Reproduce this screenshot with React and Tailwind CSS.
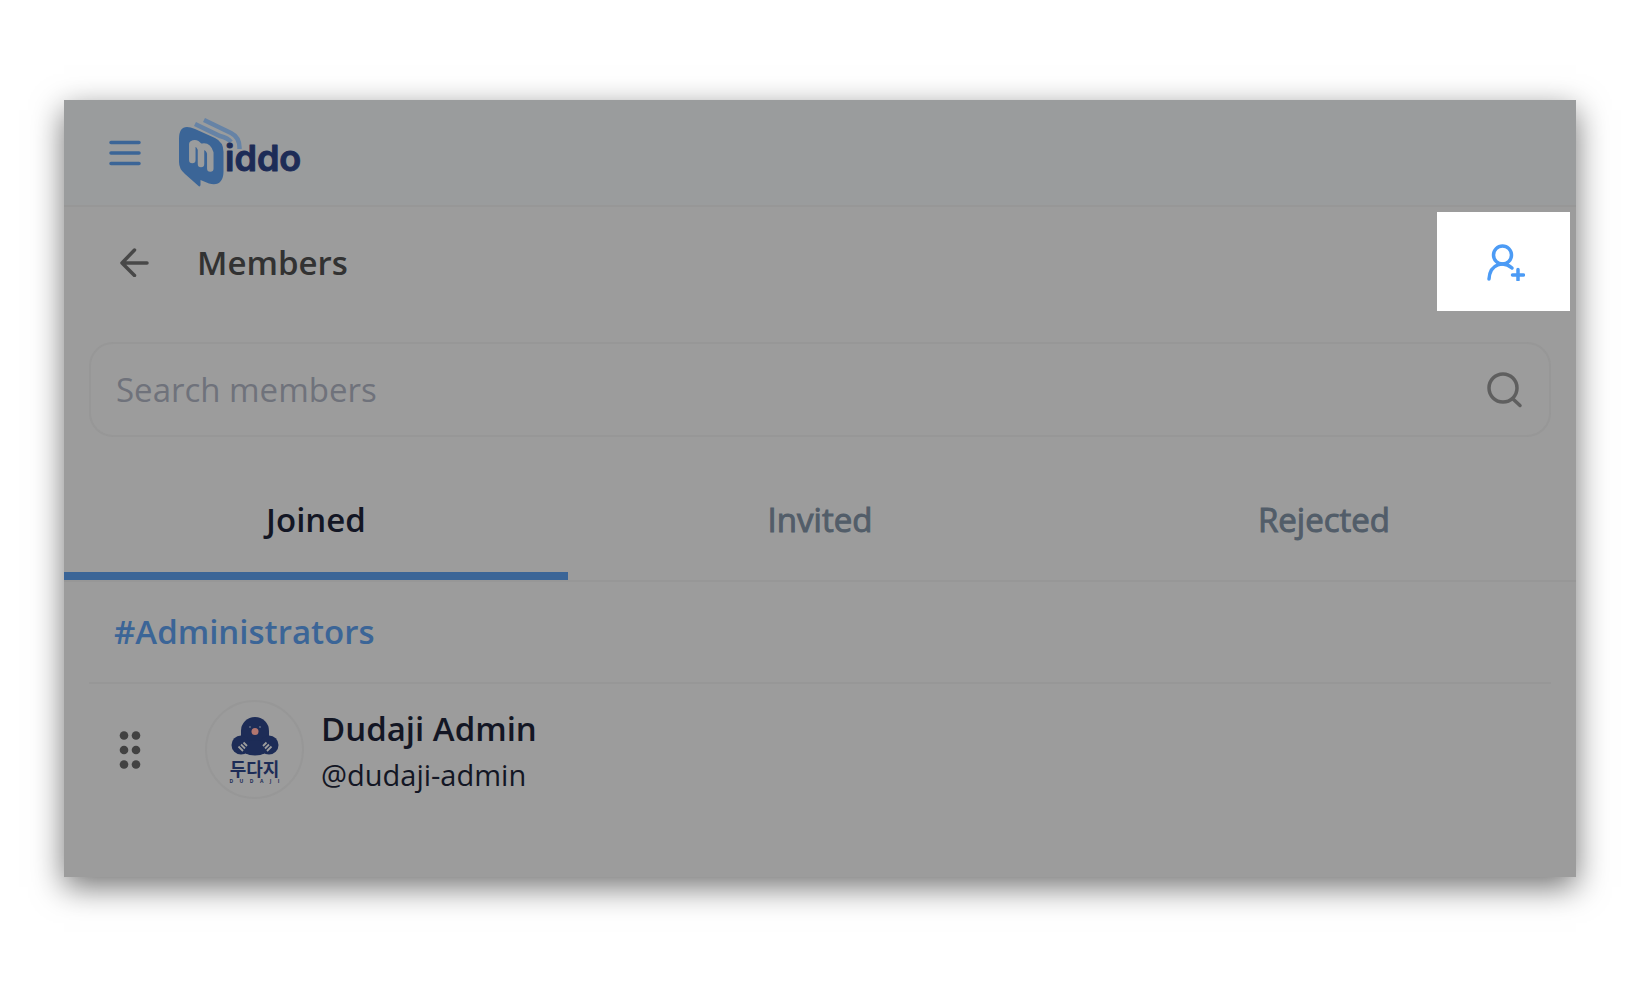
import React from "react";

function Logo() {
  return (
    <a href="#home" aria-label="middo" className="flex items-center">
      <svg viewBox="0 0 128 70" className="h-[70px] w-32" aria-hidden="true">
        <g fill="none" stroke="#6683a6" strokeWidth="4.500">
          <path d="M16 6 L41 18 Q49 20 52 24" />
          <path d="M25 2 L52 15 Q61 19.500 60.500 31" />
        </g>
        <path
          d="M0 21 Q0 4 16 11 L36 20 Q44.500 24 44.500 34 L44.500 54 Q44 69 30 65.500 L21.500 62 L21.500 67 Q21 69.500 19 67.500 L6 56 Q0 51 0 44 Z"
          fill="#3b6597"
        />
        <g fill="none" stroke="#9a9c9d" strokeWidth="6.500" strokeLinecap="round" strokeLinejoin="round">
          <path d="M13.300 42 V26 Q18 23 22 31 V46" />
          <path d="M22 29 Q29 27 31.300 35 V50.500" />
        </g>
        <text
          x="46"
          y="53"
          fill="#1d2c57"
          stroke="#1d2c57"
          strokeWidth="1"
          strokeLinejoin="round"
          fontFamily="Inter, sans-serif"
          fontSize="36"
          fontWeight="600"
        >
          iddo
        </text>
      </svg>
    </a>
  );
}

function MemberAvatar() {
  return (
    <div className="flex size-[99px] shrink-0 flex-col items-center rounded-full border-2 border-[#979797] pt-[15px] text-[#1d2c57]">
      <svg viewBox="0 0 48 40" className="h-10 w-12" aria-hidden="true">
        <g fill="#1d2c57">
          <path d="M10 14 A14 14 0 0 1 38 14 L38 30 L24 38 L10 30 Z" />
          <circle cx="10" cy="28" r="9.500" />
          <circle cx="38" cy="28" r="9.500" />
          <ellipse cx="24" cy="31" rx="14" ry="7.500" />
        </g>
        <circle cx="24" cy="14.500" r="3.500" fill="#b3766f" />
        <circle cx="19" cy="10" r="0.800" fill="#8a91a0" />
        <circle cx="29" cy="10" r="0.800" fill="#8a91a0" />
        <g stroke="#9c9c9c" strokeWidth="1.800">
          <path d="M7.500 29.500 L12 34 M10 27.500 L14 31.500 M12.500 25.500 L16 29" />
          <path d="M40.500 29.500 L36 34 M38 27.500 L34 31.500 M35.500 25.500 L32 29" />
        </g>
      </svg>
      <span className="mt-0.5 font-['Noto_Sans_CJK_KR',sans-serif] text-lg leading-[18px] font-bold">두다지</span>
      <span className="mt-px flex w-[50px] justify-between text-[5px] leading-[6px] font-bold">
        {["D", "U", "D", "A", "J", "I"].map((c, i) => (
          <span key={i}>{c}</span>
        ))}
      </span>
    </div>
  );
}

function Tab({ label, active }) {
  return (
    <button
      role="tab"
      aria-selected={active}
      className={
        active
          ? "h-[120px] flex-1 border-b-8 border-[#3b6597] pt-2 font-semibold text-[#131624]"
          : "h-[120px] flex-1 border-b-8 border-transparent pt-2 text-[#525d69] [-webkit-text-stroke:1px_#525d69]"
      }
    >
      {label}
    </button>
  );
}

export default function App() {
  return (
    <div className="min-h-screen bg-white px-16 pt-[100px] pb-16 font-['Open_Sans',sans-serif]">
      <div className="bg-[#9c9c9c] pb-[78px] shadow-[0_10px_30px_rgba(0,0,0,0.55)]">
        <header className="flex h-[107px] items-center gap-[38px] border-b-2 border-[#979797] bg-[#9a9c9d] pl-[45px]">
          <button aria-label="Menu">
            <svg viewBox="0 0 32 28" className="h-7 w-8" fill="none" stroke="#3b6597" strokeWidth="3.500" strokeLinecap="round" aria-hidden="true">
              <path d="M2 3.500H30M2 14H30M2 24.500H30" />
            </svg>
          </button>
          <Logo />
        </header>

        <div className="flex items-center py-[5px] pr-1.5 pl-[55px]">
          <button aria-label="Back">
            <svg viewBox="0 0 30 30" className="size-[30px]" fill="none" stroke="#484848" strokeWidth="3.500" strokeLinecap="round" strokeLinejoin="round" aria-hidden="true">
              <path d="M15.500 3 L3 16 L15.500 28.500 M3 16 H28" />
            </svg>
          </button>
          <h1 className="ml-12 flex-1 pt-0.5 text-[33px] leading-[48px] font-semibold text-[#323232]">Members</h1>
          <button aria-label="Add member" className="flex h-[99px] w-[133px] items-center justify-center bg-white">
            <svg viewBox="0 0 40 38" className="ml-0.5 h-[38px] w-10" fill="none" stroke="#4c9bf5" strokeWidth="3.500" strokeLinecap="round" aria-hidden="true">
              <circle cx="17.500" cy="12" r="9" />
              <path d="M4 36 C5 20 19 18 27 25" />
              <path d="M27.500 32H38.500M33 26.500V37" />
            </svg>
          </button>
        </div>

        <label className="mx-[25px] mt-[26px] flex h-[95px] items-center rounded-3xl border-2 border-[#979797] pr-[26px] pl-[25px]">
          <input
            type="text"
            aria-label="Search members"
            placeholder="Search members"
            className="min-w-0 flex-1 bg-transparent text-[33px] leading-[48px] text-[#131624] outline-none placeholder:text-[#6f727b]"
          />
          <svg viewBox="0 0 36 36" className="size-9" fill="none" stroke="#5f5f5f" strokeWidth="3.500" strokeLinecap="round" aria-hidden="true">
            <circle cx="16" cy="16" r="14" />
            <path d="M26 27 L33 33.500" />
          </svg>
        </label>

        <div role="tablist" className="mt-[23px] flex border-b-2 border-[#979797] text-[33px] leading-[48px]">
          <Tab label="Joined" active />
          <Tab label="Invited" active={false} />
          <Tab label="Rejected" active={false} />
        </div>

        <section className="mx-[25px]">
          <h2 className="border-b-2 border-[#979797] py-[26px] pl-[25px] text-[33px] leading-[48px] font-semibold text-[#3b6597]">
            #Administrators
          </h2>
          <div className="flex items-center pt-4 pl-[30px]">
            <button aria-label="Reorder Dudaji Admin">
              <svg viewBox="0 0 22 38" className="h-[38px] w-[22px]" fill="#424242" aria-hidden="true">
                <circle cx="5" cy="4.500" r="4.300" />
                <circle cx="17" cy="4.500" r="4.300" />
                <circle cx="5" cy="19" r="4.300" />
                <circle cx="17" cy="19" r="4.300" />
                <circle cx="5" cy="33.500" r="4.300" />
                <circle cx="17" cy="33.500" r="4.300" />
              </svg>
            </button>
            <div className="ml-16 flex items-center gap-[17px]">
              <MemberAvatar />
              <div className="pt-0.5 text-[#131624]">
                <p className="text-[33px] leading-[48px] font-semibold">Dudaji Admin</p>
                <p className="text-[29px] leading-[44px]">@dudaji-admin</p>
              </div>
            </div>
          </div>
        </section>
      </div>
    </div>
  );
}
